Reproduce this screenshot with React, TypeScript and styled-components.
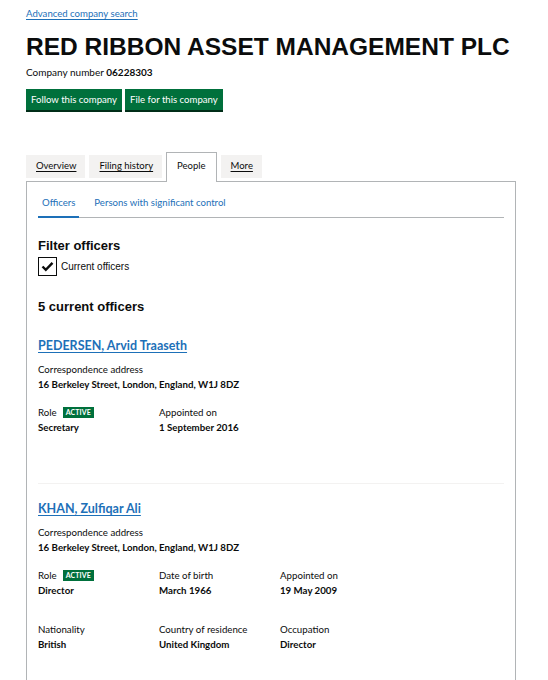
import React from "react";
import styled, { createGlobalStyle } from "styled-components";

const GlobalStyle = createGlobalStyle`
  body {
    margin: 0;
    background: #ffffff;
    font-family: Lato, "Noto Sans", "Liberation Sans", sans-serif;
    color: #0b0c0c;
  }
`;

const Page = styled.div`
  padding: 7px 26px 0 26px;
  width: 548px;
  box-sizing: border-box;
`;

const TextLink = styled.a`
  display: block;
  width: fit-content;
  color: #1d70b8;
  font-size: 9.6px;
  line-height: 14px;
  text-decoration: underline;
  text-underline-offset: 2px;
`;

const Title = styled.h1`
  font-family: "Liberation Sans", Arial, sans-serif;
  font-weight: 700;
  font-size: 24.5px;
  line-height: 30px;
  margin: 11px 0 3px 0;
  white-space: nowrap;
`;

const CompanyNumber = styled.p`
  font-size: 10px;
  line-height: 14px;
  margin: 0 0 10px 0;
  strong {
    font-weight: 700;
  }
`;

const ButtonRow = styled.div`
  display: flex;
  gap: 3px;
`;

const GreenButton = styled.button`
  background: #00703c;
  color: #ffffff;
  border: none;
  box-shadow: 0 2px 0 #002d18;
  font-family: inherit;
  font-size: 9.6px;
  height: 21px;
  padding: 0 5px;
  cursor: pointer;
`;

const Tabs = styled.div`
  display: flex;
  align-items: flex-end;
  gap: 4px;
  margin-top: 42px;
  margin-right: 6px;
`;

const Tab = styled.a<{ $active?: boolean }>`
  font-size: 9.5px;
  color: #0b0c0c;
  text-decoration: ${(p) => (p.$active ? "none" : "underline")};
  text-underline-offset: 2px;
  background: ${(p) => (p.$active ? "#ffffff" : "#f3f2f1")};
  border: ${(p) => (p.$active ? "1px solid #b1b4b6" : "none")};
  border-bottom: none;
  padding: ${(p) => (p.$active ? "8px 10px 11px" : "6px 9px 7px 10px")};
  margin-bottom: ${(p) => (p.$active ? "-1px" : "3px")};
  position: relative;
  line-height: 10px;
`;

const Panel = styled.div`
  border: 1px solid #b1b4b6;
  border-bottom: none;
  margin-right: 6px;
  padding: 11px 11px 40px 11px;
`;

const SubTabs = styled.div`
  display: flex;
  border-bottom: 1px solid #b1b4b6;
`;

const SubTab = styled.a<{ $active?: boolean }>`
  font-size: 9.6px;
  line-height: 14px;
  color: #1d70b8;
  padding: 3px 4px 6px 4px;
  margin-right: 11px;
  margin-bottom: -1px;
  border-bottom: ${(p) => (p.$active ? "2px solid #1d70b8" : "2px solid transparent")};
  text-decoration: none;
`;

const FilterHeading = styled.h2`
  font-family: "Liberation Sans", Arial, sans-serif;
  font-size: 13px;
  font-weight: 700;
  margin: 20px 0 4px 0;
`;

const CheckRow = styled.label`
  display: flex;
  align-items: center;
  gap: 4px;
  font-family: "Liberation Sans", Arial, sans-serif;
  font-size: 10px;
`;

const CheckBox = styled.span`
  width: 17px;
  height: 17px;
  border: 1.5px solid #0b0c0c;
  display: flex;
  align-items: center;
  justify-content: center;
`;

const CountHeading = styled.h2`
  font-family: "Liberation Sans", Arial, sans-serif;
  font-size: 13px;
  font-weight: 700;
  margin: 23px 0 7px 0;
`;

const Officer = styled.div<{ $divider?: boolean }>`
  padding: 17px 0 49px 0;
  border-bottom: ${(p) => (p.$divider ? "1px solid #f3f2f1" : "none")};
`;

const OfficerName = styled.a`
  display: block;
  font-size: 12.5px;
  font-weight: 700;
  color: #1d70b8;
  text-decoration: underline;
  text-underline-offset: 2px;
  margin-bottom: 9px;
  line-height: 16px;
`;

const Label = styled.div`
  font-size: 9.7px;
  line-height: 13px;
  display: flex;
  align-items: center;
  gap: 6px;
`;

const Value = styled.div`
  font-size: 9.7px;
  line-height: 13px;
  font-weight: 700;
  margin-top: 2px;
`;

const Badge = styled.span`
  background: #00703c;
  color: #ffffff;
  font-size: 7px;
  font-weight: 700;
  letter-spacing: 0.1px;
  padding: 1px 3px;
  line-height: 9px;
`;

const Grid = styled.div`
  display: grid;
  grid-template-columns: 121px 121px 121px;
  row-gap: 26px;
  margin-top: 15px;
`;

const Field = styled.div``;

type Item = { label: string; value: string; active?: boolean };

const AddressBlock = ({ value }: { value: string }) => (
  <Field>
    <Label>Correspondence address</Label>
    <Value>{value}</Value>
  </Field>
);

const officers: { name: string; items: Item[] }[] = [
  {
    name: "PEDERSEN, Arvid Traaseth",
    items: [
      { label: "Role", value: "Secretary", active: true },
      { label: "Appointed on", value: "1 September 2016" },
    ],
  },
  {
    name: "KHAN, Zulfiqar Ali",
    items: [
      { label: "Role", value: "Director", active: true },
      { label: "Date of birth", value: "March 1966" },
      { label: "Appointed on", value: "19 May 2009" },
      { label: "Nationality", value: "British" },
      { label: "Country of residence", value: "United Kingdom" },
      { label: "Occupation", value: "Director" },
    ],
  },
];

export default function App() {
  return (
    <Page>
      <GlobalStyle />
      <TextLink href="#">Advanced company search</TextLink>
      <Title>RED RIBBON ASSET MANAGEMENT PLC</Title>
      <CompanyNumber>
        Company number <strong>06228303</strong>
      </CompanyNumber>
      <ButtonRow>
        <GreenButton>Follow this company</GreenButton>
        <GreenButton>File for this company</GreenButton>
      </ButtonRow>

      <Tabs>
        <Tab href="#">Overview</Tab>
        <Tab href="#">Filing history</Tab>
        <Tab href="#" $active>
          People
        </Tab>
        <Tab href="#">More</Tab>
      </Tabs>
      <Panel>
        <SubTabs>
          <SubTab href="#" $active>
            Officers
          </SubTab>
          <SubTab href="#">Persons with significant control</SubTab>
        </SubTabs>

        <FilterHeading>Filter officers</FilterHeading>
        <CheckRow>
          <CheckBox>
            <svg width="13" height="11" viewBox="0 0 13 11">
              <path d="M1.5 5.5 L4.8 8.8 L11.5 1.8" fill="none" stroke="#0b0c0c" strokeWidth="2.4" />
            </svg>
          </CheckBox>
          Current officers
        </CheckRow>

        <CountHeading>5 current officers</CountHeading>

        {officers.map((o, i) => (
          <Officer key={o.name} $divider={i === 0}>
            <OfficerName href="#">{o.name}</OfficerName>
            <AddressBlock value="16 Berkeley Street, London, England, W1J 8DZ" />
            <Grid>
              {o.items.map((it) => (
                <Field key={it.label}>
                  <Label>
                    {it.label}
                    {it.active && <Badge>ACTIVE</Badge>}
                  </Label>
                  <Value>{it.value}</Value>
                </Field>
              ))}
            </Grid>
          </Officer>
        ))}
      </Panel>
    </Page>
  );
}
